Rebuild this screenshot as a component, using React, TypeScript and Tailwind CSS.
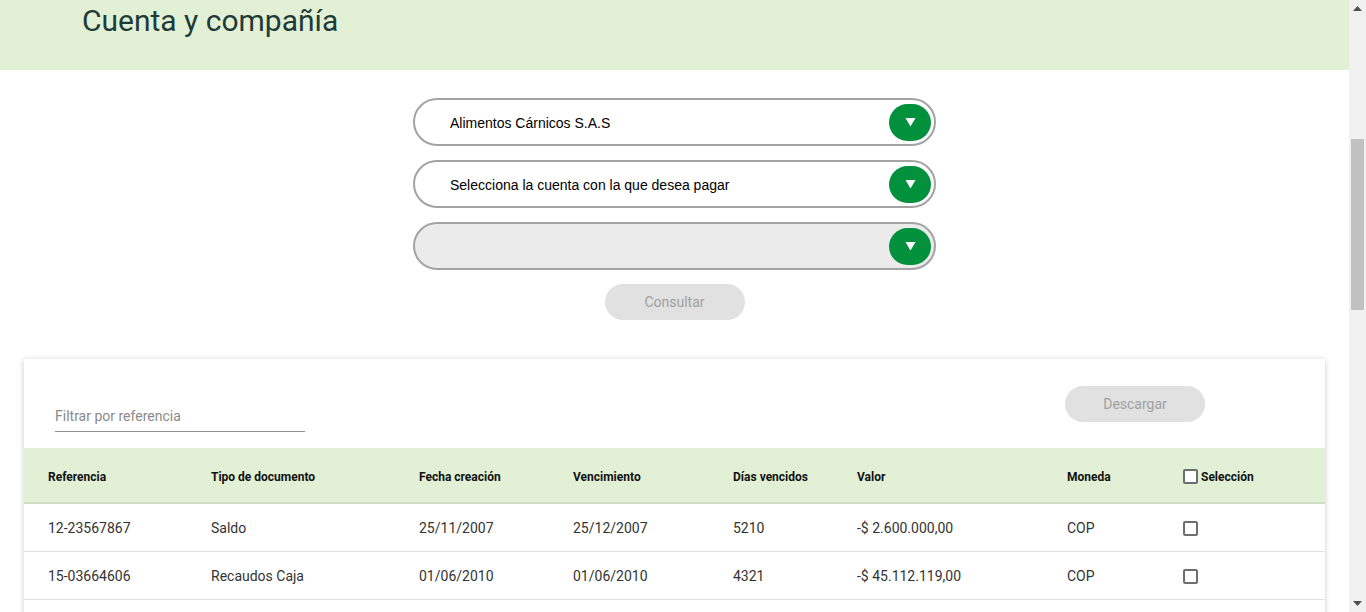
import React from 'react';

const rows = [
  { ref: '12-23567867', tipo: 'Saldo', creacion: '25/11/2007', venc: '25/12/2007', dias: '5210', valor: '-$ 2.600.000,00', moneda: 'COP' },
  { ref: '15-03664606', tipo: 'Recaudos Caja', creacion: '01/06/2010', venc: '01/06/2010', dias: '4321', valor: '-$ 45.112.119,00', moneda: 'COP' },
];

const cols = 'grid grid-cols-[163px_208px_154px_160px_124px_210px_116px_1fr] pl-6';

function SelectBox({ label, disabled }: { label?: string; disabled?: boolean }) {
  return (
    <div
      className={`flex items-center justify-between w-[523px] h-[48px] rounded-full border-2 border-[#a3a3a3] pl-[35px] pr-[3px] ${
        disabled ? 'bg-[#ebebeb]' : 'bg-white'
      }`}
    >
      <span className="text-[14px] leading-[18px] pt-[2px] text-black font-['Liberation_Sans',Arial,sans-serif]">{label}</span>
      <span className="flex items-center justify-center w-[42px] h-[37px] rounded-full bg-[#01913c]">
        <svg width="11" height="10" viewBox="0 0 11 10">
          <path d="M0.5 1 L10.5 1 L5.5 9.5 Z" fill="white" />
        </svg>
      </span>
    </div>
  );
}

function Check() {
  return <span className="inline-block w-[15px] h-[15px] border-2 border-[#6e6e6e] rounded-[2px] bg-white" />;
}

export default function App() {
  return (
    <div className="flex h-[612px] overflow-hidden font-['Roboto',sans-serif]">
      <div className="w-[1349px] shrink-0 bg-white">
        <header className="h-[70px] bg-[#e2f1d5] pl-[82px] pt-[3px]">
          <h1 className="text-[30px] leading-[36px] text-[#1f3b38]">Cuenta y compañía</h1>
        </header>

        <div className="flex flex-col items-center pt-[28px] gap-[14px]">
          <SelectBox label="Alimentos Cárnicos S.A.S" />
          <SelectBox label="Selecciona la cuenta con la que desea pagar" />
          <SelectBox disabled />
          <button className="w-[140px] h-[36px] rounded-full bg-[#e1e1e1] text-[14px] text-[#a0a0a0]">
            Consultar
          </button>
        </div>

        <section className="mx-6 mt-[39px] h-[400px] bg-white shadow-[0_1px_6px_rgba(0,0,0,0.2)]">
          <div className="flex items-start justify-between pl-[31px] pr-[120px] pt-[27px] h-[89px] shadow-[0_4px_6px_-4px_rgba(0,0,0,0.12)]">
            <div className="w-[250px] mt-[20px] border-b border-[#8f8f8f] pb-[4px] text-[14px] text-[#8a8a8a]">
              Filtrar por referencia
            </div>
            <button className="w-[140px] h-[36px] rounded-full bg-[#e1e1e1] text-[14px] text-[#a0a0a0]">
              Descargar
            </button>
          </div>

          <div className={`${cols} h-[56px] pt-[3px] items-center bg-[#e2f1d5] border-b-2 border-[#cfe0c0] text-[12px] font-bold text-[#111]`}>
            <span>Referencia</span>
            <span>Tipo de documento</span>
            <span>Fecha creación</span>
            <span>Vencimiento</span>
            <span>Días vencidos</span>
            <span>Valor</span>
            <span>Moneda</span>
            <span className="flex items-center gap-[3px]">
              <Check />
              Selección
            </span>
          </div>

          {rows.map((r) => (
            <div key={r.ref} className={`${cols} h-[48px] pt-[1px] items-center border-b border-[#e0e0e0] text-[14px] text-[#333]`}>
              <span>{r.ref}</span>
              <span>{r.tipo}</span>
              <span>{r.creacion}</span>
              <span>{r.venc}</span>
              <span>{r.dias}</span>
              <span>{r.valor}</span>
              <span>{r.moneda}</span>
              <span className="flex">
                <Check />
              </span>
            </div>
          ))}
        </section>
      </div>

      <div className="w-[17px] shrink-0 bg-[#f1f1f1] flex flex-col items-center">
        <svg width="9" height="5" viewBox="0 0 9 5" className="mt-[6px]">
          <path d="M0 5 L4.5 0 L9 5 Z" fill="#505050" />
        </svg>
        <div className="w-[13px] h-[171px] mt-[128px] bg-[#c1c1c1]" />
        <div className="flex-1" />
        <svg width="9" height="5" viewBox="0 0 9 5" className="mb-[6px]">
          <path d="M0 0 L9 0 L4.5 5 Z" fill="#505050" />
        </svg>
      </div>
    </div>
  );
}
